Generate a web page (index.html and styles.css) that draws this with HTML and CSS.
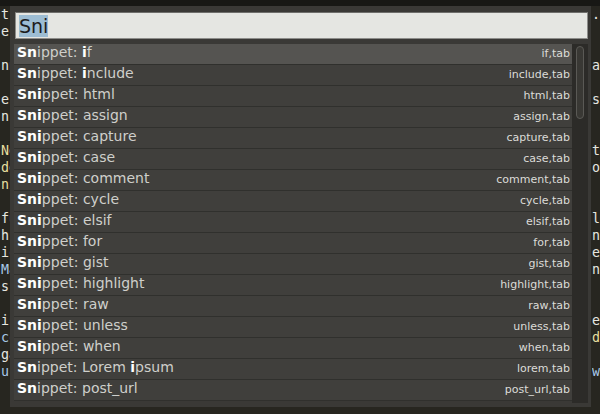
FILE: index.html
```html
<!DOCTYPE html>
<html>
<head>
<meta charset="utf-8">
<link rel="stylesheet" href="styles.css">
</head>
<body>
<div class="topbar"></div>
<div class="editor">
  <div class="ln"><span>t'</span><span class="r">.</span></div>
  <div class="ln"><span>er</span><span class="r"></span></div>
  <div class="ln"><span></span><span class="r"></span></div>
  <div class="ln"><span>nn</span><span class="r">a</span></div>
  <div class="ln"><span></span><span class="r"></span></div>
  <div class="ln"><span>e </span><span class="r">s</span></div>
  <div class="ln"><span>n </span><span class="r"></span></div>
  <div class="ln"><span></span><span class="r"></span></div>
  <div class="ln"><span class="y">Ne</span><span class="r">t</span></div>
  <div class="ln"><span class="y">de</span><span class="r">o</span></div>
  <div class="ln"><span class="y">ni</span><span class="r"></span></div>
  <div class="ln"><span></span><span class="r"></span></div>
  <div class="ln"><span>fu</span><span class="r">l</span></div>
  <div class="ln"><span>h </span><span class="r">n</span></div>
  <div class="ln"><span>ic</span><span class="r">e</span></div>
  <div class="ln"><span class="b">Ma</span><span class="r">n</span></div>
  <div class="ln"><span>s </span><span class="r"></span></div>
  <div class="ln"><span></span><span class="r"></span></div>
  <div class="ln"><span>is</span><span class="r">e</span></div>
  <div class="ln"><span class="b">cc</span><span class="r y">d</span></div>
  <div class="ln"><span>ga</span><span class="r"></span></div>
  <div class="ln"><span class="b">ur</span><span class="r b">w</span></div>
</div>

<div class="palette">
  <div class="input"><span class="sel">Sni</span></div>
  <div class="body">
    <div class="list">
      <div class="row active"><span class="name"><b>Sn</b>ippet: <b>i</b>f</span><span class="trig">if,tab</span></div>
      <div class="row"><span class="name"><b>Sn</b>ippet: <b>i</b>nclude</span><span class="trig">include,tab</span></div>
      <div class="row"><span class="name"><b>Sni</b>ppet: html</span><span class="trig">html,tab</span></div>
      <div class="row"><span class="name"><b>Sni</b>ppet: assign</span><span class="trig">assign,tab</span></div>
      <div class="row"><span class="name"><b>Sni</b>ppet: capture</span><span class="trig">capture,tab</span></div>
      <div class="row"><span class="name"><b>Sni</b>ppet: case</span><span class="trig">case,tab</span></div>
      <div class="row"><span class="name"><b>Sni</b>ppet: comment</span><span class="trig">comment,tab</span></div>
      <div class="row"><span class="name"><b>Sni</b>ppet: cycle</span><span class="trig">cycle,tab</span></div>
      <div class="row"><span class="name"><b>Sni</b>ppet: elsif</span><span class="trig">elsif,tab</span></div>
      <div class="row"><span class="name"><b>Sni</b>ppet: for</span><span class="trig">for,tab</span></div>
      <div class="row"><span class="name"><b>Sni</b>ppet: gist</span><span class="trig">gist,tab</span></div>
      <div class="row"><span class="name"><b>Sni</b>ppet: highlight</span><span class="trig">highlight,tab</span></div>
      <div class="row"><span class="name"><b>Sni</b>ppet: raw</span><span class="trig">raw,tab</span></div>
      <div class="row"><span class="name"><b>Sni</b>ppet: unless</span><span class="trig">unless,tab</span></div>
      <div class="row"><span class="name"><b>Sni</b>ppet: when</span><span class="trig">when,tab</span></div>
      <div class="row"><span class="name"><b>Sn</b>ippet: Lorem <b>i</b>psum</span><span class="trig">lorem,tab</span></div>
      <div class="row"><span class="name"><b>Sn</b>ippet: post_url</span><span class="trig">post_url,tab</span></div>
    </div>
    <div class="scroll"><div class="thumb"></div></div>
  </div>
</div>
</body>
</html>
```

FILE: styles.css
```css
html, body {
  margin: 0;
  padding: 0;
}
body {
  width: 600px;
  height: 414px;
  overflow: hidden;
  background: #272620;
  position: relative;
  font-family: "DejaVu Sans", sans-serif;
}
.topbar {
  height: 6px;
  background: #181815;
}
.editor {
  font-family: "DejaVu Sans Mono", monospace;
  font-size: 13.3px;
  line-height: 17px;
  color: #e6e6e0;
  height: 408px;
  overflow: hidden;
}
.ln {
  display: flex;
  height: 17px;
  padding-left: 1px;
  white-space: pre;
}
.ln .r {
  margin-left: auto;
  width: 8px;
  overflow: hidden;
}
.y { color: #e8dfa0; }
.b { color: #a8c8e8; }

.palette {
  position: absolute;
  left: 10px;
  top: 6px;
  width: 581px;
  height: 401px;
  box-sizing: border-box;
  background: #3a3936;
  padding: 6px 3px 6px 4px;
  display: flex;
  flex-direction: column;
}
.input {
  margin-left: 1px;
  height: 27px;
  box-sizing: border-box;
  background: #e5e6e2;
  border: 1px solid #8d8d8a;
  border-top-color: #6e6e6b;
  padding: 2px 3px 0;
  font-size: 19px;
  line-height: 22px;
  color: #1c1c1c;
}
.sel {
  background: #9dbdd3;
}
.body {
  margin-top: 5px;
  display: flex;
  height: 357px;
}
.list {
  width: 559px;
  display: flex;
  flex-direction: column;
}
.row {
  height: 20px;
  border-bottom: 1px solid #30302d;
  background: #403f3c;
  display: flex;
  align-items: baseline;
  justify-content: space-between;
  padding: 0 2px 0 3px;
  line-height: 16px;
  font-size: 14px;
  color: #cfcfcb;
}
.row.active {
  background: #555451;
}
.row b {
  color: #ffffff;
  font-weight: bold;
}
.trig {
  font-size: 11px;
  color: #dcdcd8;
}
.scroll {
  width: 16px;
  height: 359px;
  background: #2c2b28;
  display: flex;
  justify-content: center;
  padding-top: 2px;
  box-sizing: border-box;
}
.thumb {
  width: 8px;
  height: 73px;
  box-sizing: border-box;
  border: 1px solid #5a5955;
  border-radius: 5px;
  background: #393834;
}
```
